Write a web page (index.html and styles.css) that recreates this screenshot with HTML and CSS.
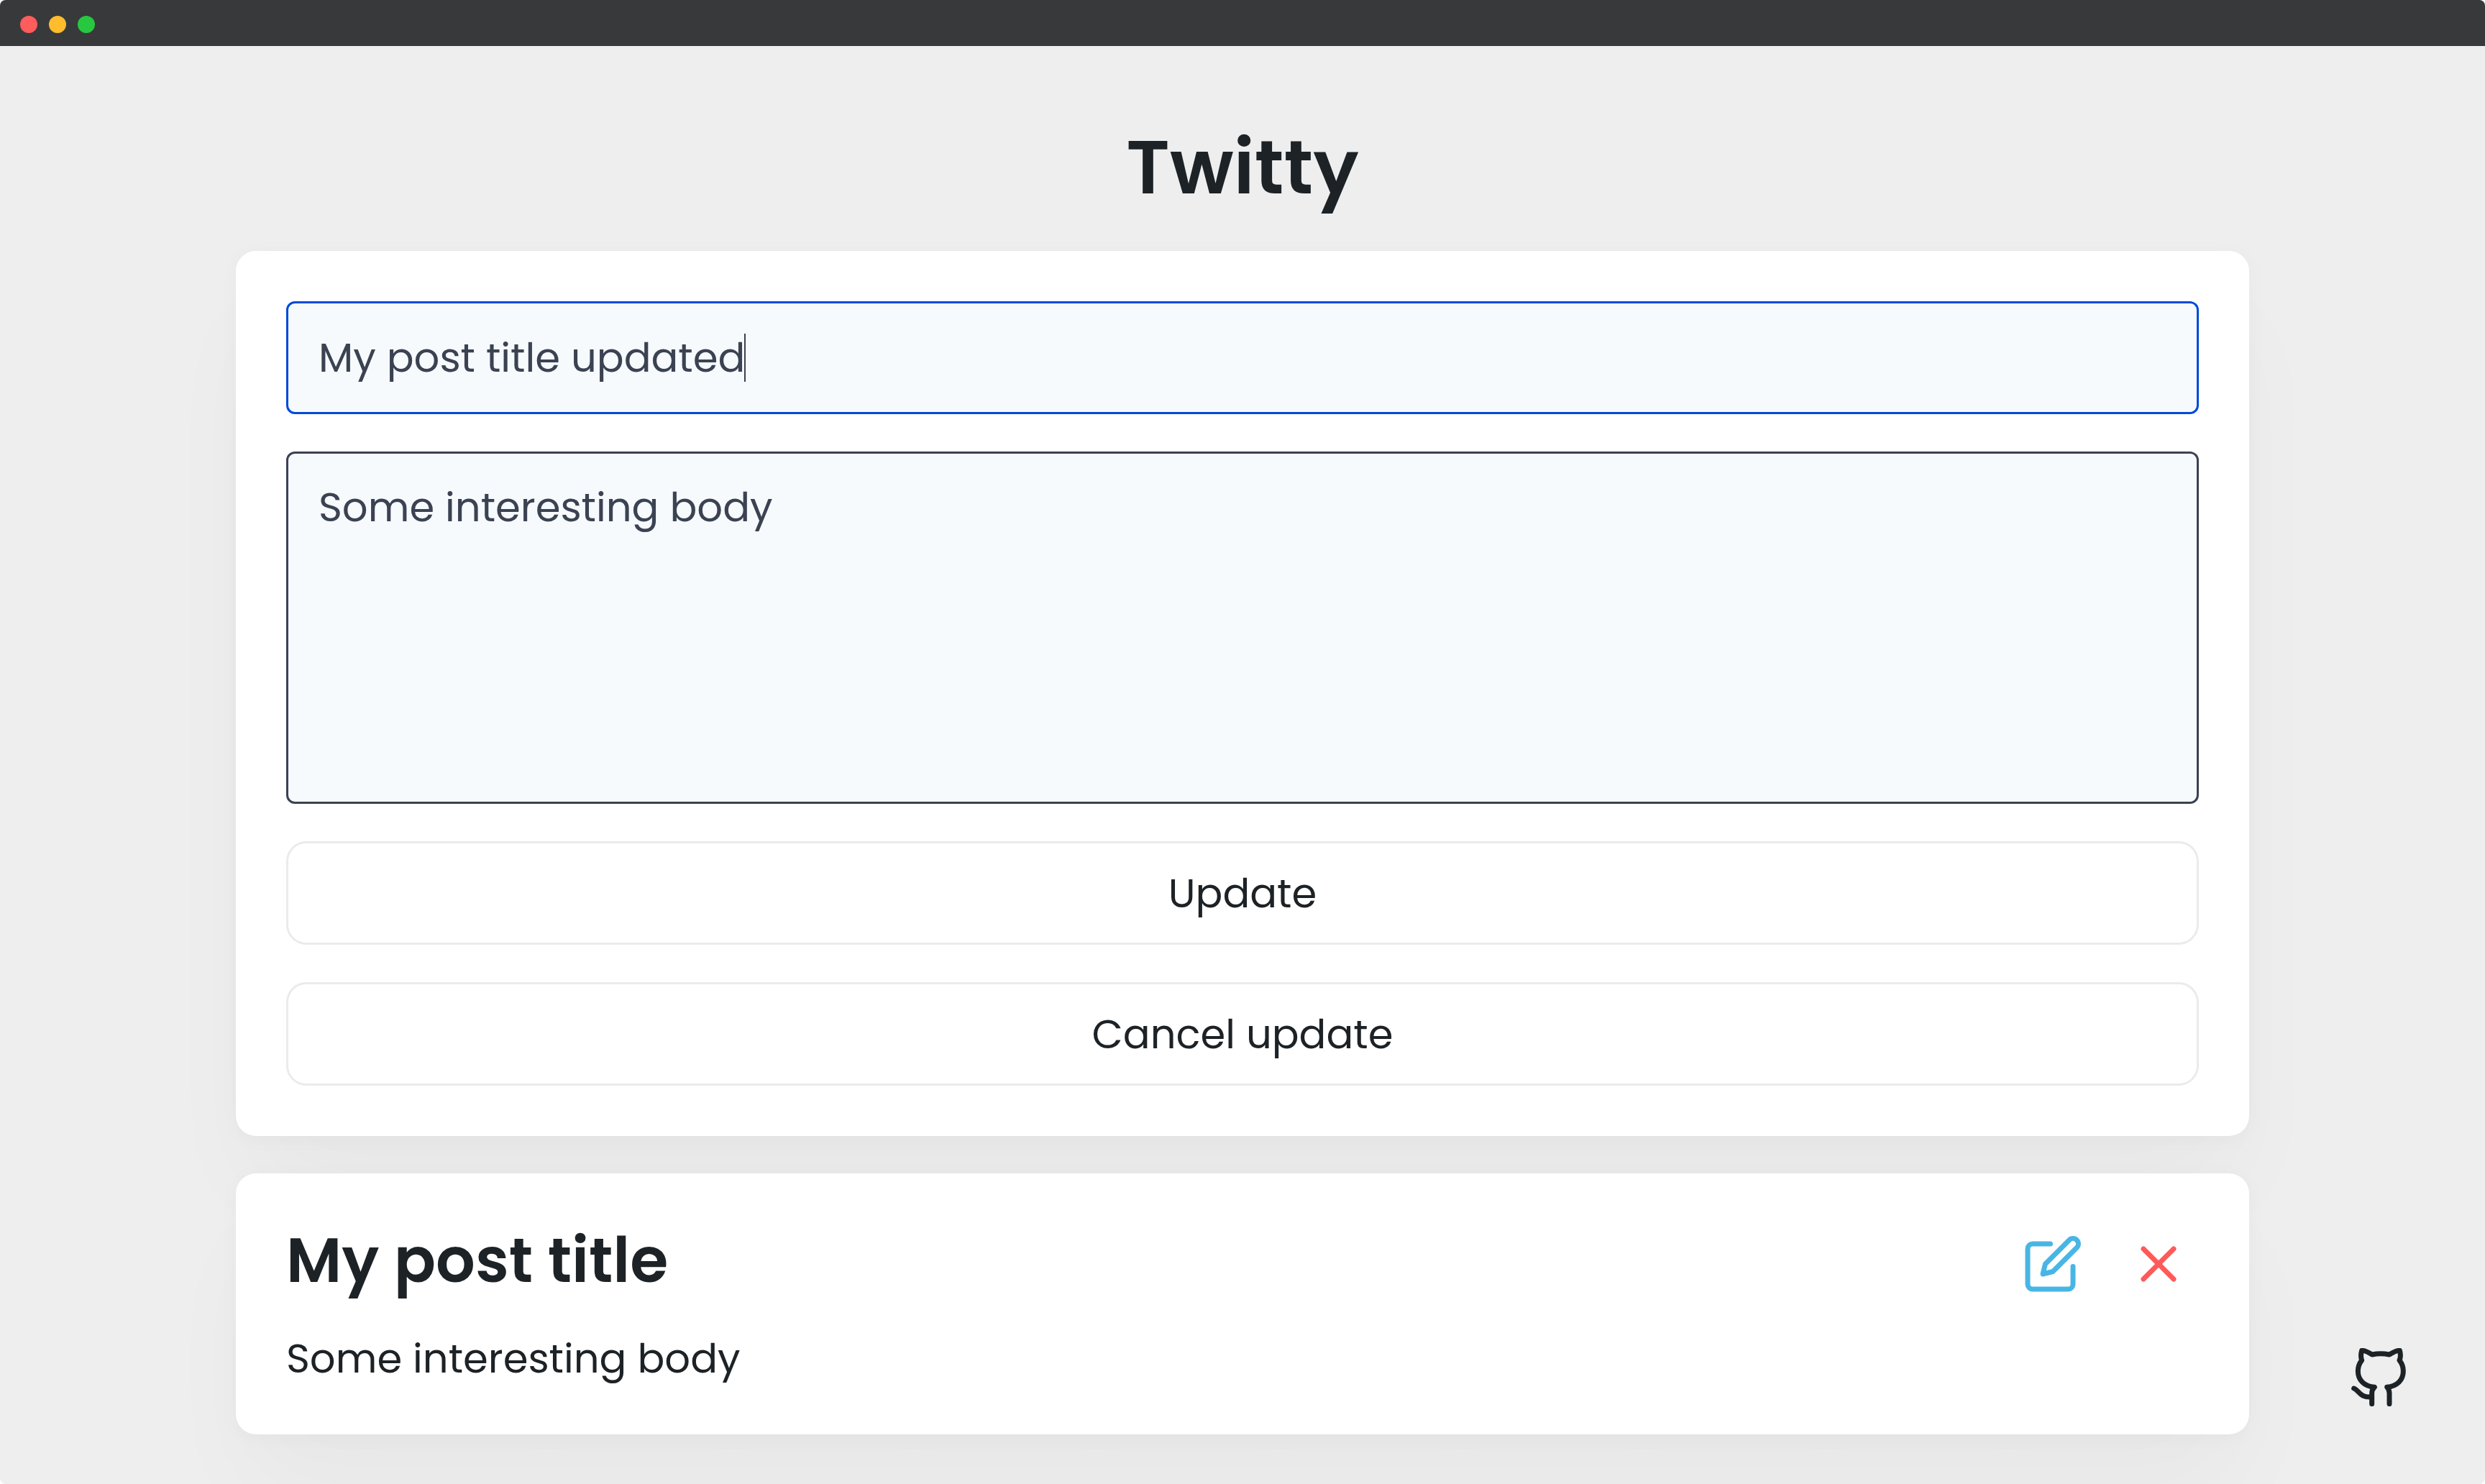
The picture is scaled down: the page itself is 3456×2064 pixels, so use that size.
FILE: index.html
```html
<!DOCTYPE html>
<html lang="en">
<head>
<meta charset="utf-8">
<meta name="viewport" content="width=device-width, initial-scale=1">
<title>Twitty</title>
<link rel="stylesheet" href="styles.css">
</head>
<body>
<div class="window">
  <header class="titlebar">
    <span class="dot dot-close"></span>
    <span class="dot dot-minimize"></span>
    <span class="dot dot-zoom"></span>
  </header>
  <main class="page">
    <h1 class="brand">Twitty</h1>
    <form class="card form">
      <div class="field">
        <input class="control control-active" type="text" aria-label="Title" value="My post title updated">
        <span class="caret"></span>
      </div>
      <textarea class="control control-area" aria-label="Body">Some interesting body</textarea>
      <button class="button" type="button">Update</button>
      <button class="button" type="button">Cancel update</button>
    </form>
    <article class="card post">
      <div class="post-head">
        <h2 class="post-title">My post title</h2>
        <div class="post-actions">
          <button class="icon-button edit" type="button" aria-label="Edit post">
            <svg class="icon" viewBox="0 0 24 24"><path d="M11 4H4a2 2 0 0 0-2 2v14a2 2 0 0 0 2 2h14a2 2 0 0 0 2-2v-7"/><path d="M18.5 2.500a2.121 2.121 0 0 1 3 3L12 15l-4 1 1-4 9.500-9.500z"/></svg>
          </button>
          <button class="icon-button remove" type="button" aria-label="Delete post">
            <svg class="icon" viewBox="0 0 24 24"><path d="M18 6L6 18M6 6l12 12"/></svg>
          </button>
        </div>
      </div>
      <p class="post-body">Some interesting body</p>
    </article>
  </main>
  <a class="github" href="#" aria-label="GitHub">
    <svg class="github-icon" viewBox="90 104 228 243"><path d="M176 337V292C176 283 179 275 187 267C145 264 118 238 118 200C118 182 124 167 134 155C129 142 130 128 134 114C150 114 165 124 177 131C200 126 225 126 249 131C261 124 276 114 292 114C296 128 297 142 291 155C301 167 307 182 307 200C307 238 280 264 239 267C246 273 249 283 249 292V337"/><path d="M101 272C122 279 125 312 175 308"/></svg>
  </a>
</div>
</body>
</html>
```
FILE: styles.css
```css
* {
  box-sizing: border-box;
}

body {
  margin: 0;
  background: #fff;
  color: #1d2226;
  font-family: Poppins, Inter, "Liberation Sans", sans-serif;
  font-size: 56px;
}

.window {
  min-height: 100vh;
  overflow: hidden;
  border-radius: 8px;
  background: #eee;
}

.titlebar {
  display: flex;
  gap: 16px;
  padding: 22px 28px 18px;
  background: #38393b;
}

.dot {
  width: 24px;
  height: 24px;
  border-radius: 50%;
}

.dot-close { background: #ff5c5c; }
.dot-minimize { background: #ffbd2e; }
.dot-zoom { background: #27c840; }

.page {
  display: flex;
  flex-direction: column;
  gap: 52px;
  max-width: 2800px;
  margin: 0 auto;
  padding: 105px 0 68px;
}

.brand {
  margin: 0;
  font-size: 105px;
  font-weight: 600;
  line-height: 128px;
  text-align: center;
}

.card {
  padding: 70px;
  border-radius: 28px;
  background: #fff;
  box-shadow: 0 4px 28px rgba(0, 0, 0, 0.03), 0 88px 140px -16px rgba(0, 0, 0, 0.03);
}

.form {
  display: flex;
  flex-direction: column;
  gap: 52px;
}

.field {
  position: relative;
  display: flex;
}

.control {
  width: 100%;
  padding: 33px 42px;
  border: 3px solid #3b4252;
  border-radius: 12px;
  outline: none;
  background: #f6fafd;
  color: #3b4252;
  font: inherit;
  line-height: 84px;
}

.control-active {
  height: 157px;
  border-color: #0049db;
}

.control-area {
  display: block;
  height: 490px;
  resize: none;
}

.caret {
  position: absolute;
  top: 45px;
  left: 637px;
  width: 2px;
  height: 67px;
  background: #3b4252;
}

.button {
  height: 144px;
  padding: 0;
  border: 3px solid #ebebeb;
  border-radius: 28px;
  background: #fff;
  color: inherit;
  font: inherit;
}

.post {
  display: flex;
  flex-direction: column;
  gap: 41px;
}

.post-head {
  display: flex;
  justify-content: space-between;
  align-items: flex-start;
}

.post-title {
  margin: 0;
  font-size: 86px;
  font-weight: 600;
  line-height: 102px;
}

.post-actions {
  display: flex;
  gap: 35px;
}

.icon-button {
  display: flex;
  padding: 14px;
  border: 0;
  background: none;
}

.edit { color: #48b6e5; }
.remove { color: #ff5a5a; }

.icon {
  width: 84px;
  height: 84px;
  fill: none;
  stroke: currentColor;
  stroke-width: 2;
  stroke-linecap: round;
  stroke-linejoin: round;
}

.post-body {
  margin: 0;
  line-height: 70px;
}

.github {
  position: fixed;
  right: 110px;
  bottom: 108px;
  display: flex;
  color: #1d2226;
}

.github-icon {
  width: 76px;
  height: 81px;
  fill: none;
  stroke: currentColor;
  stroke-width: 21;
  stroke-linecap: round;
  stroke-linejoin: round;
}
```
